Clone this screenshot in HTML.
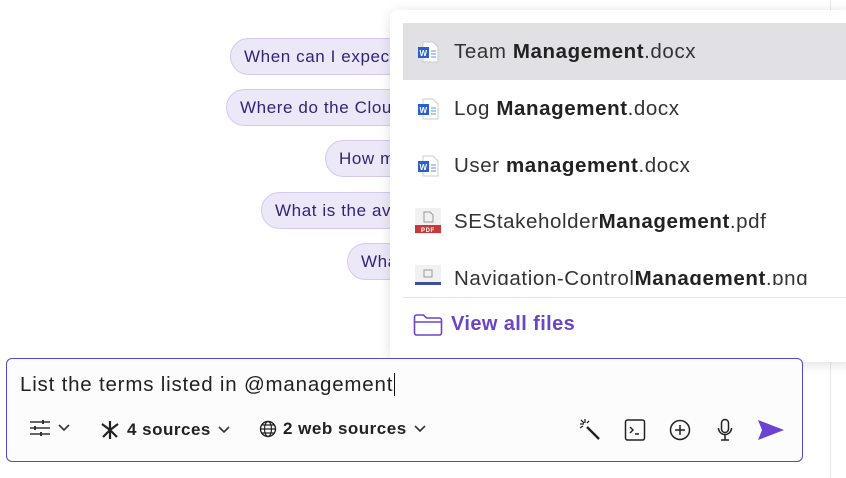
<!DOCTYPE html>
<html><head><style>
*{box-sizing:border-box;margin:0;padding:0}
body{width:846px;height:478px;overflow:hidden;background:#fff;font-family:"Liberation Sans",sans-serif;position:relative}
.vl{position:absolute;left:830px;top:0;width:1px;height:478px;background:#e6e6ea}
.chip{position:absolute;height:37px;border-radius:19px;background:#ede8f8;border:1px solid #d6c8f2;color:#33237a;font-size:17px;letter-spacing:0.6px;line-height:35px;padding-left:13px;width:300px;white-space:nowrap}
.dd{position:absolute;left:390px;top:10px;width:470px;height:352px;background:#fff;border-radius:8px;box-shadow:0 2px 12px rgba(0,0,0,.12)}
.row{position:absolute;left:13px;width:460px;height:57px;font-size:20.5px;letter-spacing:0.6px;color:#333;line-height:57px;padding-left:51px;white-space:nowrap}
.row b{color:#222}
.ic{position:absolute;left:14px;top:18px}
.box{position:absolute;left:6px;top:358px;width:797px;height:104px;border:1px solid #5548d0;border-radius:6px;background:#fcfcfd}
.txt{position:absolute;left:13px;top:14px;font-size:20.5px;letter-spacing:0.8px;color:#222}
.tb{position:absolute;top:60px;font-size:17px;letter-spacing:0.5px;font-weight:bold;color:#222;display:flex;align-items:center;gap:6px}
</style></head><body>
<div class="vl"></div>
<div class="chip" style="left:230px;top:38px">When can I expect</div>
<div class="chip" style="left:226px;top:89px">Where do the Cloud</div>
<div class="chip" style="left:325px;top:140px">How many</div>
<div class="chip" style="left:261px;top:192px">What is the avg</div>
<div class="chip" style="left:347px;top:243px">What</div>
<div class="dd">
 <div class="row" style="top:13px;background:#e1e1e5">
  <svg class="ic" width="24" height="22" viewBox="0 0 24 22"><path d="M6 1h10l5 5v15H6z" fill="#fff" stroke="#ccc"/><rect x="1" y="6" width="11" height="11" fill="#2b5fcf"/><text x="2.5" y="15" font-size="8" fill="#fff" font-family="Liberation Sans" font-weight="bold">W</text><path d="M14 10h5M14 13h5M14 16h5" stroke="#6b8de0"/></svg>
  Team <b>Management</b>.docx</div>
 <div class="row" style="top:70px">
  <svg class="ic" width="24" height="22" viewBox="0 0 24 22"><path d="M6 1h10l5 5v15H6z" fill="#fff" stroke="#ccc"/><rect x="1" y="6" width="11" height="11" fill="#2b5fcf"/><text x="2.5" y="15" font-size="8" fill="#fff" font-family="Liberation Sans" font-weight="bold">W</text><path d="M14 10h5M14 13h5M14 16h5" stroke="#6b8de0"/></svg>
  Log <b>Management</b>.docx</div>
 <div class="row" style="top:127px">
  <svg class="ic" width="24" height="22" viewBox="0 0 24 22"><path d="M6 1h10l5 5v15H6z" fill="#fff" stroke="#ccc"/><rect x="1" y="6" width="11" height="11" fill="#2b5fcf"/><text x="2.5" y="15" font-size="8" fill="#fff" font-family="Liberation Sans" font-weight="bold">W</text><path d="M14 10h5M14 13h5M14 16h5" stroke="#6b8de0"/></svg>
  User <b>management</b>.docx</div>
 <div class="row" style="top:183px">
  <svg class="ic" width="26" height="26" viewBox="0 0 26 26" style="top:15px;left:12px"><rect x="0" y="0" width="26" height="26" fill="#f1f1f1"/><rect x="0" y="17" width="26" height="8" fill="#c9383a"/><text x="6" y="24" font-size="6" fill="#fff" font-family="Liberation Sans" font-weight="bold">PDF</text><path d="M9 4h6l3 3v7H9z" fill="none" stroke="#999"/></svg>
  SEStakeholder<b>Management</b>.pdf</div>
 <div class="row" style="top:240px;height:35px;overflow:hidden">
  <svg class="ic" width="26" height="26" viewBox="0 0 26 26" style="top:15px;left:12px"><rect x="0" y="0" width="26" height="26" fill="#f1f1f1"/><rect x="0" y="17" width="26" height="9" fill="#3c4f9a"/><rect x="9" y="5" width="8" height="7" fill="none" stroke="#999"/></svg>
  Navigation-Control<b>Management</b>.png</div>
 <div style="position:absolute;left:13px;top:287px;width:460px;height:1px;background:#e3e3e6"></div>
 <svg style="position:absolute;left:23px;top:303px" width="30" height="24" viewBox="0 0 30 24"><path d="M1.5 4a2 2 0 0 1 2-2h7l3 3h13a2 2 0 0 1 2 2v13a2 2 0 0 1-2 2h-23a2 2 0 0 1-2-2z M1.5 9h27" fill="none" stroke="#6b45c8" stroke-width="1.6"/></svg>
 <div style="position:absolute;left:61px;top:303px;font-size:20px;letter-spacing:0.4px;font-weight:bold;color:#6b45c8">View all files</div>
</div>
<div class="box">
 <div class="txt">List the terms listed in @management<span style="border-left:1.5px solid #111;margin-left:1px"></span></div>
 <div class="tb" style="left:22px"><svg width="22" height="18" viewBox="0 0 22 18"><path d="M1 3h20M1 9h20M1 15h20" stroke="#333" stroke-width="1.6"/><path d="M14 1v4M6 7v4M12 13v4" stroke="#333" stroke-width="2"/></svg><svg width="14" height="10" viewBox="0 0 14 10"><path d="M2 2l5 5 5-5" fill="none" stroke="#333" stroke-width="1.6"/></svg></div>
 <div class="tb" style="left:92px"><svg width="22" height="22" viewBox="0 0 22 22"><path d="M11 2v18M3 5l8 6 8-6M4 18l7-7 7 7" fill="none" stroke="#222" stroke-width="2.2"/></svg>4 sources<svg width="14" height="10" viewBox="0 0 14 10"><path d="M2 2l5 5 5-5" fill="none" stroke="#333" stroke-width="1.6"/></svg></div>
 <div class="tb" style="left:252px"><svg width="18" height="18" viewBox="0 0 18 18"><circle cx="9" cy="9" r="7.5" fill="none" stroke="#222" stroke-width="1.4"/><ellipse cx="9" cy="9" rx="3.5" ry="7.5" fill="none" stroke="#222" stroke-width="1.2"/><path d="M1.5 9h15M3 5h12M3 13h12" stroke="#222" stroke-width="1.2"/></svg>2 web sources<svg width="14" height="10" viewBox="0 0 14 10"><path d="M2 2l5 5 5-5" fill="none" stroke="#333" stroke-width="1.6"/></svg></div>
 <svg style="position:absolute;left:571px;top:59px" width="24" height="24" viewBox="0 0 24 24"><path d="M9 9l12 12" stroke="#222" stroke-width="2.4"/><path d="M7 1v4M2 6h4M3 2l3 3M11 3l-2 2M2 10l3-2" stroke="#222" stroke-width="1.3"/></svg>
 <svg style="position:absolute;left:617px;top:59px" width="22" height="24" viewBox="0 0 22 24"><rect x="1.5" y="2" width="19" height="20" rx="2" fill="none" stroke="#222" stroke-width="1.5"/><path d="M6 9l3 3-3 3M11 16h4" fill="none" stroke="#222" stroke-width="1.4"/></svg>
 <svg style="position:absolute;left:662px;top:60px" width="22" height="22" viewBox="0 0 22 22"><circle cx="11" cy="11" r="9.5" fill="none" stroke="#222" stroke-width="1.5"/><path d="M11 6v10M6 11h10" stroke="#222" stroke-width="1.5"/></svg>
 <svg style="position:absolute;left:709px;top:59px" width="18" height="24" viewBox="0 0 18 24"><rect x="5.5" y="1.5" width="7" height="13" rx="3.5" fill="none" stroke="#222" stroke-width="1.5"/><path d="M2.5 10a6.5 6.5 0 0 0 13 0M9 17v5M5 22h8" fill="none" stroke="#222" stroke-width="1.5"/></svg>
 <svg style="position:absolute;left:750px;top:60px" width="28" height="22" viewBox="0 0 28 22"><path d="M1 1l26 10L1 21l4-10z" fill="#6a44d0"/></svg>
</div>
</body></html>
